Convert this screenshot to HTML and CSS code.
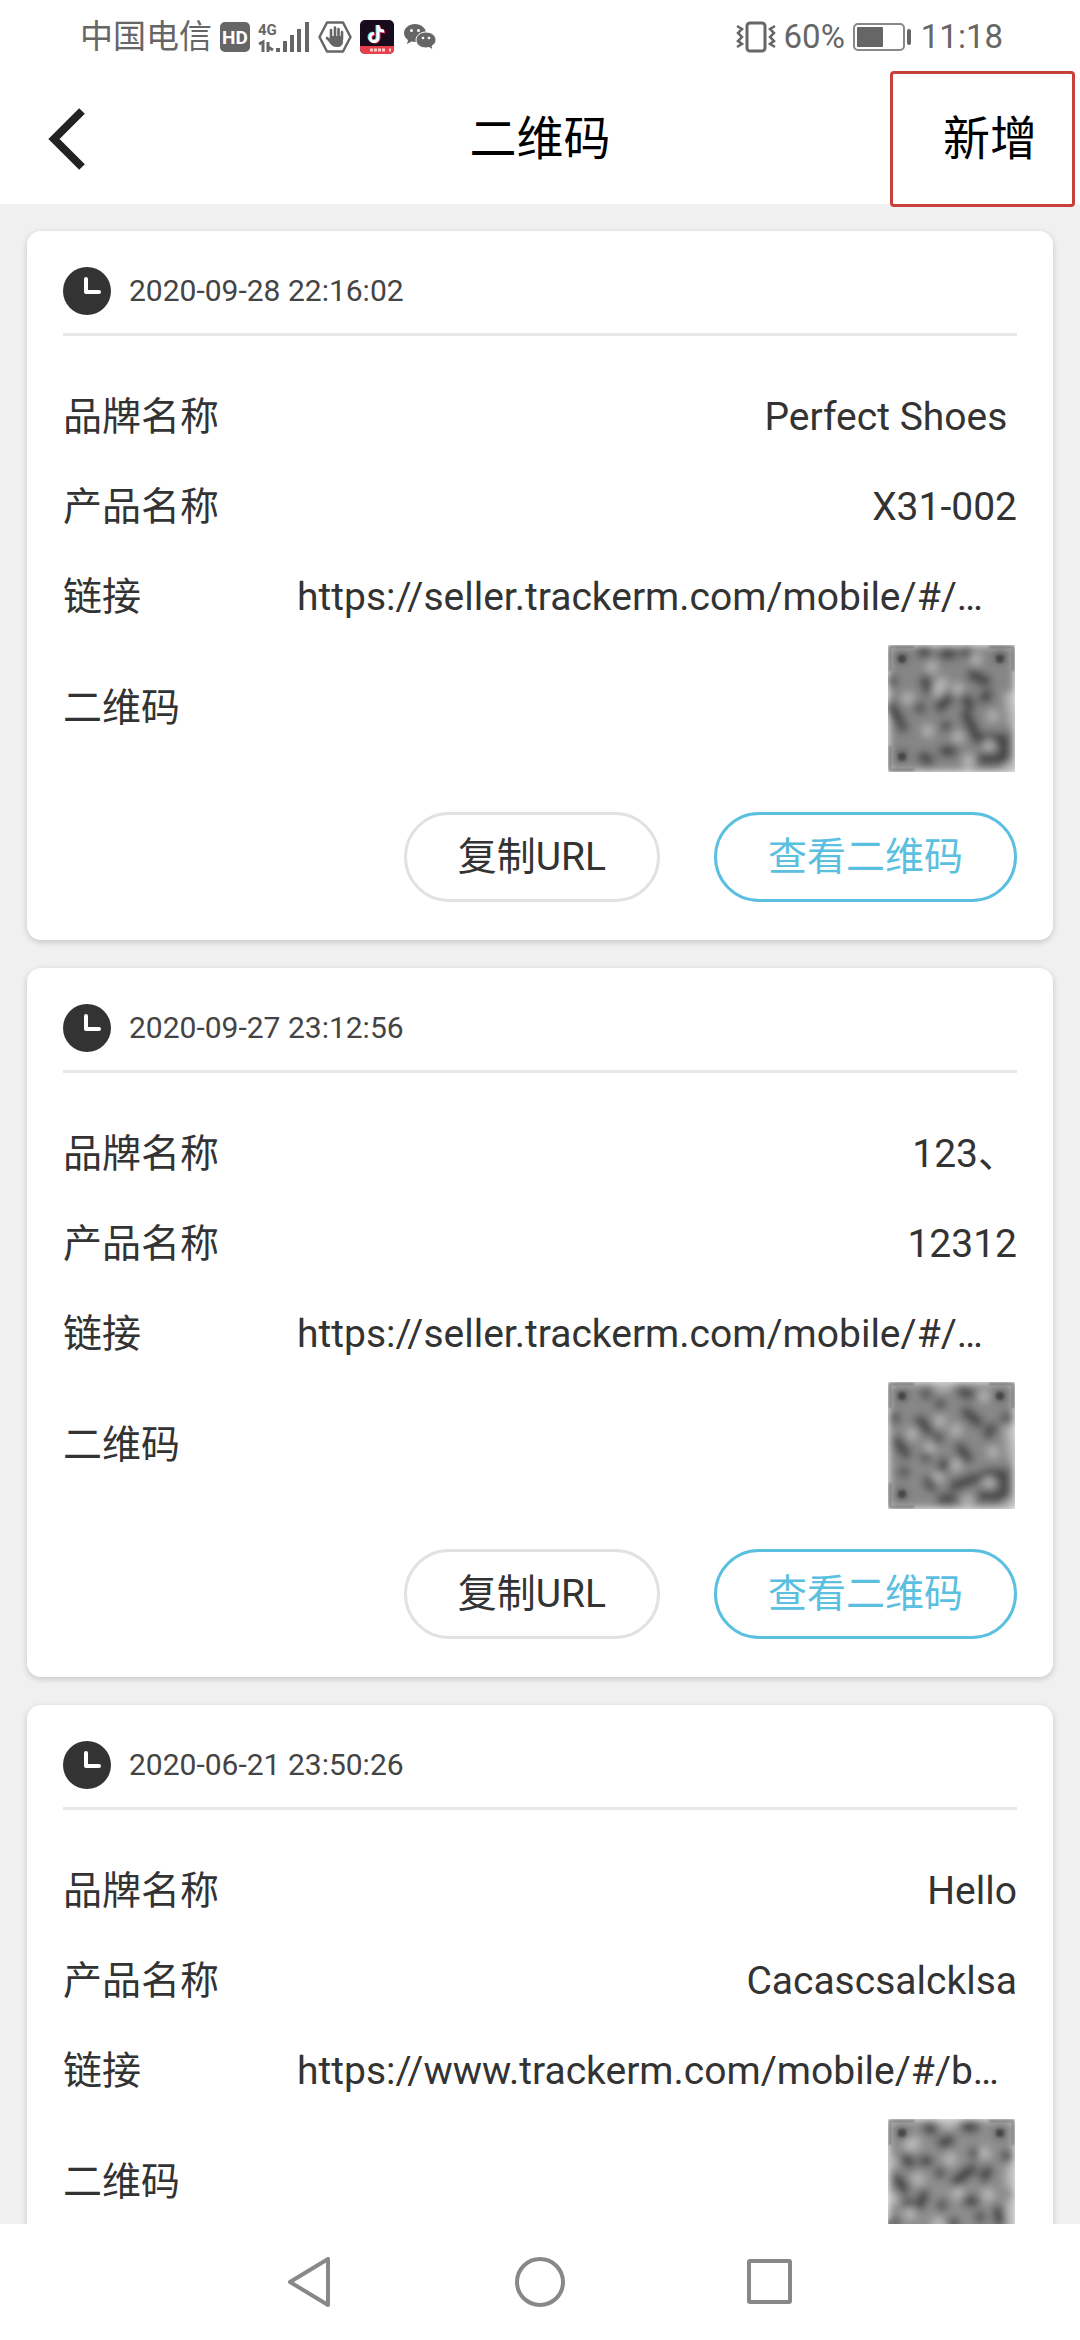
FILE: index.html
```html
<!DOCTYPE html>
<html lang="zh-CN">
<head>
    <title>二维码</title>
    <meta charset="UTF-8">
    <meta name="viewport" content="width=device-width, initial-scale=1.0">
    <link rel="stylesheet" href="styles.css">
</head>
<body>
    <!-- shared icons -->
    <svg class="defs" width="0" height="0" aria-hidden="true">
        <defs>
            <filter id="soft" x="0" y="0" width="1" height="1"><feGaussianBlur stdDeviation="4"/></filter>
            <filter id="edge" x="-0.1" y="-0.1" width="1.2" height="1.2"><feGaussianBlur stdDeviation="1"/></filter>
            <symbol id="clock" viewBox="0 0 48 48">
                <circle cx="24" cy="24" r="24" fill="#333"/>
                <path d="M23 12v13h13" fill="none" stroke="#fff" stroke-width="4" stroke-linecap="round" stroke-linejoin="round"/>
            </symbol>
            <symbol id="finders" viewBox="0 0 127 127">
                <g filter="url(#edge)" fill="none" stroke="#555" stroke-width="2" opacity="0.6">
                    <path d="M2 26V2h24M101 2h24v24M2 101v24h24"/>
                </g>
                <g filter="url(#edge)" fill="#333" opacity="0.6">
                    <circle cx="14" cy="14" r="4"/><circle cx="112" cy="14" r="4"/><circle cx="14" cy="112" r="4"/>
                </g>
            </symbol>
        </defs>
    </svg>

    <div class="status-bar">
        <div class="status-left">
            <span class="carrier">中国电信</span>
            <svg class="hd" width="30" height="30" viewBox="0 0 30 30">
                <rect width="30" height="30" rx="5" fill="#666"/>
                <text x="15" y="22" text-anchor="middle" font-size="19" font-weight="700" fill="#fff">HD</text>
            </svg>
            <svg class="signal" width="52" height="32" viewBox="0 0 52 32">
                <text x="0" y="14" font-size="15" font-weight="700" fill="#666">4G</text>
                <path d="M1 23l4-2v10M10 21v10M10 26l5 3" fill="none" stroke="#666" stroke-width="3"/>
                <path d="M20 27v4M27 20v11M34 14v17M41 8v23M49 1v30" fill="none" stroke="#666" stroke-width="4"/>
            </svg>
            <svg class="hand" width="34" height="32" viewBox="0 0 34 32">
                <path d="M9 1.500h16L32.500 16 25 30.500H9L1.500 16z" fill="none" stroke="#666" stroke-width="2.500" stroke-linejoin="round"/>
                <path d="M13 17V9M17 16V6.500M20.500 16V8M24 18v-7M9 17l5 5" fill="none" stroke="#666" stroke-width="2.600" stroke-linecap="round"/>
                <path d="M12 15h13v5c0 4-2 6-6 6s-6-2-8-5z" fill="#666"/>
            </svg>
            <svg class="tiktok" width="34" height="34" viewBox="0 0 34 34">
                <rect width="34" height="34" rx="5" fill="#170b1c"/>
                <path d="M0 26h34v3a5 5 0 0 1-5 5H5a5 5 0 0 1-5-5z" fill="#e8404a"/>
                <path d="M10 30h16M29 30h2" stroke="#ffc9c9" stroke-width="3" stroke-dasharray="3 1"/>
                <path d="M17 5v12a4 4 0 1 1-4-4M17 5c0 4 2 6 6 6" fill="none" stroke="#4fd8dc" stroke-width="3"/>
                <path d="M19 6v12a4 4 0 1 1-4-4M19 6c0 4 2 6 6 6" fill="none" stroke="#e83e66" stroke-width="3"/>
                <path d="M18 5v12.500a4 4 0 1 1-4-4M18 5c0 4 2 6 6 6" fill="none" stroke="#fff" stroke-width="3"/>
            </svg>
            <svg class="wechat" width="32" height="28" viewBox="0 0 32 28">
                <path d="M11 1C5 1 0 5 0 10c0 3 1.500 5 4 7l-1 4 4.500-2.500L11 19c6 0 11-4 11-9S17 1 11 1z" fill="#666"/>
                <path d="M22 9c-5.500 0-10 3.500-10 8s4.500 8 10 8l3-.500 4 2.500-1-4c2.500-1.500 4-3.500 4-6 0-4.500-4.500-8-10-8z" fill="#666" stroke="#fff" stroke-width="1"/>
                <g fill="#fff"><circle cx="7.500" cy="7.500" r="1.500"/><circle cx="14.500" cy="7.500" r="1.500"/><circle cx="19" cy="15" r="1.300"/><circle cx="25" cy="15" r="1.300"/></g>
            </svg>
        </div>
        <div class="status-right">
            <svg class="vibrate" width="40" height="32" viewBox="0 0 40 32">
                <rect x="11" y="2" width="18" height="28" rx="3" fill="none" stroke="#666" stroke-width="3"/>
                <path d="M1 5l5 3-4 4 4 4-4 4 4 3-5 3M39 5l-5 3 4 4-4 4 4 4-4 3 5 3" fill="none" stroke="#666" stroke-width="2.500"/>
            </svg>
            <span>60%</span>
            <svg class="battery" width="60" height="28" viewBox="0 0 60 28">
                <rect x="1" y="1" width="50" height="26" rx="4" fill="none" stroke="#888" stroke-width="2"/>
                <rect x="4" y="4" width="26" height="20" rx="1" fill="#666"/>
                <rect x="54" y="6" width="4" height="16" rx="2" fill="#666"/>
            </svg>
            <span>11:18</span>
        </div>
    </div>

    <header class="header">
        <button class="back-btn" aria-label="返回">
            <svg width="38" height="62" viewBox="0 0 38 62"><path d="M34 3L6 31l28 28" fill="none" stroke="#222" stroke-width="8"/></svg>
        </button>
        <h1>二维码</h1>
        <button class="add-btn">新增</button>
    </header>

    <main class="list">
        <section class="card">
            <div class="card-time">
                <svg class="clock"><use href="#clock"/></svg>
                <time>2020-09-28 22:16:02</time>
            </div>
            <div class="card-body">
                <div class="row"><span>品牌名称</span><span>Perfect Shoes&nbsp;</span></div>
                <div class="row"><span>产品名称</span><span>X31-002</span></div>
                <div class="row"><span>链接</span><a class="link" href="#">https://seller.trackerm.com/mobile/#/…</a></div>
                <div class="row row-code">
                    <span>二维码</span>
                    <svg class="code" viewBox="0 0 127 127">
                        <g filter="url(#soft)" fill="none" stroke-linecap="round">
                            <rect width="127" height="127" fill="#868686"/>
                            <path stroke="#404040" stroke-width="11" d="M14 13h0M112 12h0M14 110h0M37 36l4 9M60 54l-8 8M15 82h0M3 62l8 12M58 81h0M35 112l6 3M56 9h8M78 7h0M84 30l14 6M78 54l4 6M100 50l-4 3M78 70l12 24M98 94h18v20H94M56 106h8M34 7h4M4 36h0M32 63h0"/>
                            <path stroke="#b8b8b8" stroke-width="11" d="M54 38l-5 8M105 71h0M40 86h0M20 53h0M80 119l1-4M101 100h0M88 14h0M44 22h0M122 52l4 24M70 44h0M70 92h0M119 125l7-5"/>
                        </g>
                        <use href="#finders"/>
                    </svg>
                </div>
            </div>
            <div class="actions">
                <button class="btn">复制URL</button>
                <button class="btn btn-primary">查看二维码</button>
            </div>
        </section>

        <section class="card">
            <div class="card-time">
                <svg class="clock"><use href="#clock"/></svg>
                <time>2020-09-27 23:12:56</time>
            </div>
            <div class="card-body">
                <div class="row"><span>品牌名称</span><span>123、</span></div>
                <div class="row"><span>产品名称</span><span>12312</span></div>
                <div class="row"><span>链接</span><a class="link" href="#">https://seller.trackerm.com/mobile/#/…</a></div>
                <div class="row row-code">
                    <span>二维码</span>
                    <svg class="code" viewBox="0 0 127 127">
                        <g filter="url(#soft)" fill="none" stroke-linecap="round">
                            <rect width="127" height="127" fill="#888"/>
                            <path stroke="#444" stroke-width="11" d="M14 14h0M112 14h0M14 112h0M38 12h0M74 10l8 2M32 38l8 10M50 56h0M7 36h0M10 60l8 12M38 75h0M16 90h0M54 86l2-5M54 117h10M78 30l12 10M104 46l-4 6M72 66l8 10M66 104l22-8M98 92h18v22H94M40 100l4 4M118 36h0M52 22h0"/>
                            <path stroke="#b8b8b8" stroke-width="11" d="M52 39h0M105 70h0M68 48h0M52 3h6M50 95h0M68 83h0M42 66h0M80 119h0M101 100h0M24 52h0M122 48l4 26M96 14h0M119 125l7-5"/>
                        </g>
                        <use href="#finders"/>
                    </svg>
                </div>
            </div>
            <div class="actions">
                <button class="btn">复制URL</button>
                <button class="btn btn-primary">查看二维码</button>
            </div>
        </section>

        <section class="card">
            <div class="card-time">
                <svg class="clock"><use href="#clock"/></svg>
                <time>2020-06-21 23:50:26</time>
            </div>
            <div class="card-body">
                <div class="row"><span>品牌名称</span><span>Hello</span></div>
                <div class="row"><span>产品名称</span><span>Cacascsalcklsa</span></div>
                <div class="row"><span>链接</span><a class="link" href="#">https://www.trackerm.com/mobile/#/b…</a></div>
                <div class="row row-code">
                    <span>二维码</span>
                    <svg class="code" viewBox="0 0 127 127">
                        <g filter="url(#soft)" fill="none" stroke-linecap="round">
                            <rect width="127" height="127" fill="#8e8e8e"/>
                            <path stroke="#3c3c3c" stroke-width="11" d="M14 14h0M112 14h0M40 9l4 2M54 24l8-3M78 8h8M18 40l4 4M36 42h4M118 37h0M10 60l6 10M36 76l-4 10M52 54h0M68 62l16-12M100 52l-4 6M80 82h6M110 92l2 10M20 84h0M6 104h0M54 86h0M92 98h0M66 104h0M86 34h0"/>
                            <path stroke="#c0c0c0" stroke-width="11" d="M0 43h3M26 24l-4 2M58 3h6M96 34h0M22 94h0M50 104l2 8M100 76h0M62 40h0M124 50v14M30 60h0M124 86v20M70 74h0M4 80h0"/>
                        </g>
                        <use href="#finders"/>
                    </svg>
                </div>
            </div>
        </section>
    </main>

    <nav class="nav-bar">
        <button aria-label="返回"><svg viewBox="0 0 50 50"><path d="M5 25L43 2v46z"/></svg></button>
        <button aria-label="主页"><svg viewBox="0 0 50 50"><circle cx="25" cy="25" r="23"/></svg></button>
        <button aria-label="最近任务"><svg viewBox="0 0 50 50"><rect x="4" y="4" width="41" height="41" rx="1"/></svg></button>
    </nav>
</body>
</html>
```
FILE: styles.css
```css
* { margin: 0; padding: 0; box-sizing: border-box; }
body { display: flex; flex-direction: column; height: 100vh; overflow: hidden; font-family: Roboto, "Noto Sans CJK SC", sans-serif; line-height: 1.2; background: #f0f0f0; color: #333; }
button { font-family: inherit; line-height: inherit; background: none; border: none; cursor: pointer; }
svg { display: block; flex-shrink: 0; }
.defs { position: absolute; }

.status-bar { display: flex; justify-content: space-between; align-items: center; height: 74px; padding: 0 77px 0 80px; background: #fff; color: #666; font-size: 33px; flex-shrink: 0; }
.status-left, .status-right { display: flex; align-items: center; gap: 8px; }
.tiktok { margin-right: 2px; }

.header { position: relative; z-index: 1; display: grid; grid-template-columns: 1fr auto 1fr; align-items: center; height: 130px; background: #fff; color: #000; flex-shrink: 0; }
.header h1 { font-size: 47px; font-weight: 400; }
.back-btn { justify-self: start; padding: 0 48px; }
.add-btn { justify-self: end; align-self: center; height: 136px; margin: -3px 5px; padding: 0 35px 0 50px; border: 3px solid #c8403c; border-radius: 4px; font-size: 47px; color: #000; }

.list { flex: 1; min-height: 0; overflow: hidden; padding: 27px; }
.card { background: #fff; border-radius: 14px; padding: 36px 36px 38px; margin-bottom: 28px; box-shadow: 0 2px 6px rgba(0,0,0,0.18); }
.card-time { display: flex; align-items: center; gap: 18px; padding-bottom: 18px; border-bottom: 3px solid #e8e8e8; font-size: 30px; color: #444; }
.clock { width: 48px; height: 48px; }
.card-body { padding-top: 36px; }
.row { display: flex; justify-content: space-between; align-items: center; height: 90px; font-size: 39px; white-space: nowrap; }
.row-code { height: 132px; }
.link { width: 720px; max-width: 76%; overflow: hidden; text-overflow: ellipsis; color: inherit; text-decoration: none; }
.code { width: 127px; height: 127px; margin-right: 2px; }
.actions { display: flex; justify-content: flex-end; gap: 54px; margin-top: 38px; }
.btn { height: 90px; padding: 0 51px; border: 3px solid #e2e2e2; border-radius: 45px; font-size: 39px; color: #333; }
.btn-primary { border-color: #5bc0e0; color: #5bc0e0; }

.nav-bar { display: flex; justify-content: center; align-items: center; gap: 180px; height: 116px; background: #fff; flex-shrink: 0; }
.nav-bar svg { width: 50px; height: 50px; fill: none; stroke: #888; stroke-width: 4; stroke-linejoin: round; }
```
